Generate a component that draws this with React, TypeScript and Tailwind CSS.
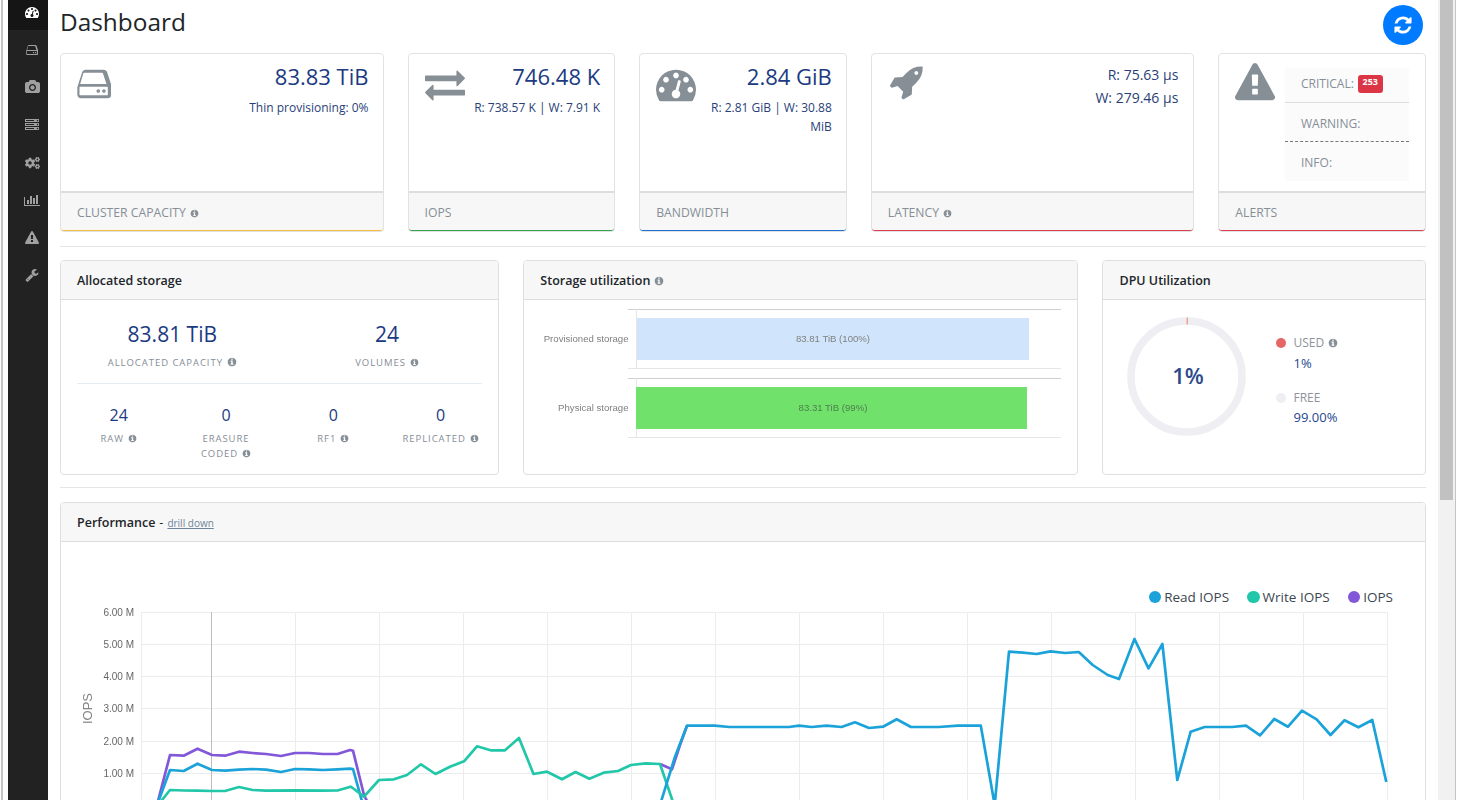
import { FaCogs } from "react-icons/fa";

const paths = {
  tachometer: "M384 1152q0-53-37.5-90.5t-90.5-37.5-90.5 37.5-37.5 90.5 37.5 90.5 90.5 37.5 90.5-37.5 37.5-90.5zm192-448q0-53-37.5-90.5t-90.5-37.5-90.5 37.5-37.5 90.5 37.5 90.5 90.5 37.5 90.5-37.5 37.5-90.5zm428 481l101-382q6-26-7.5-48.5t-38.5-29.5-48 6.5-30 39.5l-101 382q-60 5-107 43.5t-63 98.5q-20 77 20 146t117 89 146-20 89-117q16-60-6-117t-72-91zm660-33q0-53-37.5-90.5t-90.5-37.5-90.5 37.5-37.5 90.5 37.5 90.5 90.5 37.5 90.5-37.5 37.5-90.5zm-640-640q0-53-37.5-90.5t-90.5-37.5-90.5 37.5-37.5 90.5 37.5 90.5 90.5 37.5 90.5-37.5 37.5-90.5zm448 192q0-53-37.5-90.5t-90.5-37.5-90.5 37.5-37.5 90.5 37.5 90.5 90.5 37.5 90.5-37.5 37.5-90.5zm320 448q0 261-141 483-19 29-54 29h-1402q-35 0-54-29-141-221-141-483 0-182 71-348t191-286 286-191 348-71 348 71 286 191 191 286 71 348z",
  hdd: "M1040 1216q0 33-23.5 56.5t-56.5 23.5-56.5-23.5-23.5-56.5 23.5-56.5 56.5-23.5 56.5 23.5 23.5 56.5zm256 0q0 33-23.5 56.5t-56.5 23.5-56.5-23.5-23.5-56.5 23.5-56.5 56.5-23.5 56.5 23.5 23.5 56.5zm96 160v-320q0-13-9.5-22.5t-22.5-9.5h-1216q-13 0-22.5 9.5t-9.5 22.5v320q0 13 9.5 22.5t22.5 9.5h1216q13 0 22.5-9.5t9.5-22.5zm-1248-475h1188l-158-485q-4-13-16-21.5t-26-8.5h-808q-14 0-26 8.5t-16 21.5zm1408 155v320q0 66-47 113t-113 47h-1216q-66 0-113-47t-47-113v-320q0-25 16-75l197-606q17-53 63-86t101-33h808q55 0 101 33t63 86l197 606q16 50 16 75z",
  exchange: "M1792 1184v192q0 13-9.5 22.5t-22.5 9.5h-1376v192q0 13-9.5 22.5t-22.5 9.5q-12 0-24-10l-319-320q-9-9-9-22 0-14 9-23l320-320q9-9 23-9 13 0 22.5 9.5t9.5 22.5v192h1376q13 0 22.5 9.5t9.5 22.5zm0-544q0 14-9 23l-320 320q-9 9-23 9-13 0-22.5-9.5t-9.5-22.5v-192h-1376q-13 0-22.5-9.5t-9.5-22.5v-192q0-13 9.5-22.5t22.5-9.5h1376v-192q0-14 9-23t23-9q12 0 24 10l319 319q9 9 9 23z",
  rocket: "M1504 448q0-40-28-68t-68-28-68 28-28 68 28 68 68 28 68-28 28-68zm224-288q0 249-75.5 430.5t-253.5 360.5q-81 80-195 176l-20 379q-2 16-16 26l-384 224q-7 4-16 4-12 0-23-9l-64-64q-13-14-8-32l85-276-281-281-276 85q-3 1-9 1-14 0-23-9l-64-64q-17-19-5-39l224-384q10-14 26-16l379-20q96-114 176-195 188-187 358-258t431-71q14 0 24 9.5t10 22.5z",
  warning: "M1024 1375v-190q0-14-9.5-23.5t-22.5-9.5h-192q-13 0-22.5 9.5t-9.5 23.5v190q0 14 9.5 23.5t22.5 9.5h192q13 0 22.5-9.5t9.5-23.5zm-2-374l18-459q0-12-10-19-13-11-24-11h-220q-11 0-24 11-10 7-10 21l17 457q0 10 10 16.5t24 6.5h185q14 0 23.5-6.5t10.5-16.5zm-14-934l768 1408q35 63-2 126-17 29-46.5 46t-63.5 17h-1536q-34 0-63.5-17t-46.5-46q-37-63-2-126l768-1408q17-31 47-49t65-18 65 18 47 49z",
  refresh: "M1639 1056q0 5-1 7-64 268-268 434.5t-478 166.5q-146 0-282.5-55t-243.5-157l-129 129q-19 19-45 19t-45-19-19-45v-448q0-26 19-45t45-19h448q26 0 45 19t19 45-19 45l-137 137q71 66 161 102t187 36q134 0 250-65t186-179q11-17 53-117 8-23 30-23h192q13 0 22.5 9.5t9.5 22.5zm25-800v448q0 26-19 45t-45 19h-448q-26 0-45-19t-19-45 19-45l138-138q-148-137-349-137-134 0-250 65t-186 179q-11 17-53 117-8 23-30 23h-199q-13 0-22.5-9.5t-9.5-22.5v-7q65-268 270-434.5t480-166.5q146 0 284 55.5t245 156.5l130-129q19-19 45-19t45 19 19 45z",
  info: "M1152 1376v-160q0-14-9-23t-23-9h-96v-512q0-14-9-23t-23-9h-320q-14 0-23 9t-9 23v160q0 14 9 23t23 9h96v320h-96q-14 0-23 9t-9 23v160q0 14 9 23t23 9h448q14 0 23-9t9-23zm-128-896v-160q0-14-9-23t-23-9h-192q-14 0-23 9t-9 23v160q0 14 9 23t23 9h192q14 0 23-9t9-23zm640 416q0 209-103 385.5t-279.5 279.5-385.5 103-385.5-103-279.5-279.5-103-385.5 103-385.5 279.5-279.5 385.5-103 385.5 103 279.5 279.5 103 385.5z",
  camera: "M960 672q119 0 203.5 84.5t84.5 203.5-84.5 203.5-203.5 84.5-203.5-84.5-84.5-203.5 84.5-203.5 203.5-84.5zm704-416q106 0 181 75t75 181v896q0 106-75 181t-181 75h-1408q-106 0-181-75t-75-181v-896q0-106 75-181t181-75h224l51-136q19-49 69.5-84.5t103.5-35.5h512q53 0 103.5 35.5t69.5 84.5l51 136h224zm-704 1152q185 0 316.5-131.5t131.5-316.5-131.5-316.5-316.5-131.5-316.5 131.5-131.5 316.5 131.5 316.5 316.5 131.5z",
  server: "M128 1408h1024v-128h-1024v128zm0-512h1024v-128h-1024v128zm1568 448q0-40-28-68t-68-28-68 28-28 68 28 68 68 28 68-28 28-68zm-1568-960h1024v-128h-1024v128zm1568 448q0-40-28-68t-68-28-68 28-28 68 28 68 68 28 68-28 28-68zm0-512q0-40-28-68t-68-28-68 28-28 68 28 68 68 28 68-28 28-68zm96 832v384h-1792v-384h1792zm0-512v384h-1792v-384h1792zm0-512v384h-1792v-384h1792z",
  barChart: "M640 896v512h-256v-512h256zm384-512v1024h-256v-1024h256zm1024 1152v128h-2048v-1152h128v1024h1920zm-640-896v768h-256v-768h256zm384-384v1152h-256v-1152h256z",
  wrench: "M448 1472q0-26-19-45t-45-19-45 19-19 45 19 45 45 19 45-19 19-45zm644-420l-682 682q-37 37-90 37-52 0-91-37l-106-108q-38-36-38-90 0-53 38-91l681-681q39 98 114.5 173.5t173.5 114.5zm634-435q0 39-23 106-47 134-164.5 217.5t-258.5 83.5q-185 0-316.5-131.5t-131.5-316.5 131.5-316.5 316.5-131.5q58 0 121.5 16.5t107.5 46.5q16 11 16 28t-16 28l-293 169v224l193 107q5-3 79-48.5t135.5-81 70.5-35.5q15 0 23.5 10t8.5 25z",
};

const Fa = ({ d, vw = 1792, className }: { d: string; vw?: number; className: string }) => (
  <svg viewBox={`0 0 ${vw} 1792`} fill="currentColor" className={className}>
    <path d={d} />
  </svg>
);

const Info = ({ big }: { big?: boolean }) => (
  <Fa d={paths.info} className={`inline-block text-[#868e96] align-[-1px] ml-1 ${big ? "w-[10px] h-[10px]" : "w-[9px] h-[9px]"}`} />
);

const sideItems = [
  <Fa d={paths.hdd} vw={1536} className="w-[12px] h-[14px]" />,
  <Fa d={paths.camera} vw={1920} className="w-[15px] h-[14px]" />,
  <Fa d={paths.server} className="w-[14px] h-[14px]" />,
  <FaCogs className="w-[15px] h-[14px]" />,
  <Fa d={paths.barChart} vw={2048} className="w-[16px] h-[14px]" />,
  <Fa d={paths.warning} className="w-[14px] h-[14px]" />,
  <Fa d={paths.wrench} className="w-[14px] h-[14px]" />,
];

const Sidebar = () => (
  <div className="w-10 shrink-0 bg-[#222222] text-[#a0a0a0]">
    <div className="h-[30px] pb-[6px] mb-px bg-[#151515] text-white flex items-center justify-center pl-2">
      <Fa d={paths.tachometer} className="w-[14px] h-[14px]" />
    </div>
    {sideItems.map((icon, i) => (
      <div key={i} className="h-[37.6px] flex items-center justify-center pl-2">
        {icon}
      </div>
    ))}
  </div>
);

const StatCard = ({ icon, label, info, border, children }: {
  icon: React.ReactNode; label: string; info?: boolean; border: string; children: React.ReactNode;
}) => (
  <div className="h-[179px] flex flex-col bg-white border border-[#e2e2e2] rounded-[4px]">
    <div className="flex-1 flex justify-between pl-4 pr-[14px] min-h-0">
      <div className="shrink-0 text-[#868e96] pt-[10px]">{icon}</div>
      {children}
    </div>
    <div className={`h-[40px] shrink-0 flex items-center px-4 pt-[3px] bg-[#f7f7f7] border-t-2 border-t-[#dddddd] border-b ${border} rounded-b-[3px] text-[12.2px] text-[#868e96]`}>
      {label}
      {info && <Info />}
    </div>
  </div>
);

const StatValue = ({ value, sub }: { value: string; sub: string }) => (
  <div className="text-right pt-[8px] text-[#1b3a82]">
    <div className="text-[22px] leading-[28px]">{value}</div>
    <div className="text-[12px] leading-[19px] mt-[8px] text-[#2a3f78]">{sub}</div>
  </div>
);

const Card = ({ title, children, className = "" }: { title: React.ReactNode; children: React.ReactNode; className?: string }) => (
  <div className={`border border-[#dfdfdf] rounded-[4px] bg-white flex flex-col ${className}`}>
    <div className="h-[39px] shrink-0 flex items-center px-4 pt-[2px] bg-[#f7f7f7] border-b border-[#dddddd] rounded-t-[3px] text-[12.5px] font-semibold text-[#212529]">
      {title}
    </div>
    {children}
  </div>
);

const Metric = ({ value, label, big }: { value: string; label: React.ReactNode; big?: boolean }) => (
  <div className="text-center">
    <div className={big ? "text-[21px] leading-[30px] text-[#1b3a82]" : "text-[16px] leading-[24px] text-[#1b3a82]"}>{value}</div>
    <div className={`text-[9.5px] tracking-[0.1em] leading-[15px] text-[#868e96] ${big ? "mt-[6px]" : "mt-[4px]"}`}>{label}</div>
  </div>
);

const AllocatedStorage = () => (
  <Card title="Allocated storage">
    <div className="px-4">
      <div className="-mx-3 grid grid-cols-2 pt-[19px]">
        <Metric big value="83.81 TiB" label={<>ALLOCATED CAPACITY<Info big /></>} />
        <Metric big value="24" label={<>VOLUMES<Info /></>} />
      </div>
      <div className="border-t border-[#e3ebf5] mt-[13px]" />
      <div className="-mx-3 grid grid-cols-4 pt-[19px]">
        <Metric value="24" label={<>RAW<Info /></>} />
        <Metric value="0" label={<>ERASURE<br />CODED<Info /></>} />
        <Metric value="0" label={<>RF1<Info /></>} />
        <Metric value="0" label={<>REPLICATED<Info /></>} />
      </div>
    </div>
  </Card>
);

const StorageChart = () => (
  <Card title={<>Storage utilization<Info big /></>}>
    <svg viewBox="524 300 553 174" className="w-[553px] h-[174px] blur-[0.3px] font-['Liberation_Sans',sans-serif]">
      <g fill="none" strokeWidth="1">
        <path d="M628 309.5H1061M628 378.5H1061" stroke="#cfcfcf" />
        <path d="M628 368.5H1061M628 437.5H1061M636.5 309V368M636.5 378V437" stroke="#e6e6e6" />
      </g>
      <rect x="637" y="318" width="392" height="42" fill="#d0e5fb" />
      <rect x="636" y="387" width="391" height="42" fill="#70e26b" />
      <g fontSize="9.6" fill="#808080">
        <text x="628.5" y="341.5" textAnchor="end">Provisioned storage</text>
        <text x="628.5" y="410.5" textAnchor="end">Physical storage</text>
        <text x="833" y="341.5" textAnchor="middle">83.81 TiB (100%)</text>
      </g>
      <text x="833" y="410.5" textAnchor="middle" fontSize="9.6" fill="#4f7f4c">83.31 TiB (99%)</text>
    </svg>
  </Card>
);

const DpuChart = () => (
  <Card title="DPU Utilization">
    <div className="flex items-start pl-6 pt-[17px]">
      <div className="relative w-[119px] h-[119px] shrink-0">
        <svg viewBox="0 0 119 119" className="w-[119px] h-[119px]">
          <circle cx="59.5" cy="59.5" r="55.5" fill="none" stroke="#eeeef3" strokeWidth="7.5" />
          <rect x="59.5" y="0.5" width="1.5" height="7" fill="#eba68f" />
        </svg>
        <div className="absolute inset-0 flex items-center justify-center pl-[2px] pb-[2px] text-[22px] font-semibold text-[#2d4a8a]">1%</div>
      </div>
      <div className="ml-[30px] pt-[16px] text-[12px] leading-[20px]">
        <div className="flex items-center gap-[7px] text-[#8f9399]">
          <span className="w-[10px] h-[10px] rounded-full bg-[#e46666]" />
          <span>USED<Info big /></span>
        </div>
        <div className="pl-[17px] text-[13px] text-[#24468f]">1%</div>
        <div className="flex items-center gap-[7px] text-[#8f9399] mt-[15px]">
          <span className="w-[10px] h-[10px] rounded-full bg-[#eeeef3]" />
          <span>FREE</span>
        </div>
        <div className="pl-[17px] -mt-px text-[13px] text-[#24468f]">99.00%</div>
      </div>
    </div>
  </Card>
);

const purple = "157,805 170,755 183.7,755.7 197.5,748.7 212,755 225,755.7 239,751.7 252.6,753 266,754 281,756 295,753 309,753 323,754 337.5,754 350,750 353,750.7 364,795 369,805";
const tealLine = "158,805 170,790 183.7,790.5 197.5,790.7 212,791 225,791 239,787 252.6,790 266,790.7 295,790.3 323,790.7 337.5,790.5 350.6,786.7 354,789 364,796.7 379,780 394,779.3 407,775 421,764.3 435.5,774 450,766.7 464,761.3 477,746.3 490.6,750.3 505,750.3 519,738 533.5,774 547,771.7 562,779.3 575.5,772 589.4,778.7 603.7,772.7 618,771 631,765 645.7,763.3 660,764 674,805";
const purpleTail = "660,764 672,769.3 680,745 687,725.7";
const blueLeft = "157,805 170,770 183.7,771 197.5,763.7 212,770 225,770.7 239,769.7 252.6,769 266,769.7 281,772 295,769 309,769.3 323,770 337.5,769.3 350,768.7 353,769 363,805";
const blueRight = "660,805 675,756.7 687,725.7 714.6,725.7 729.5,727 789,727 799,725.7 811.6,727 826.6,725.7 841.5,727 855,722.3 869,728 883,726.7 896.7,719.3 911,727 938.5,727 958,725.7 980.8,725.7 994.7,805 1009,651.7 1023,652.7 1036.5,654 1050.4,651.3 1065.4,653 1078.8,652 1092.7,665 1107.7,675 1119,679 1134.5,639 1148.5,668.3 1162.4,644 1177.3,780 1190.7,731.7 1204.7,727 1232,727 1246,725.7 1260,735.3 1274.3,719 1288,726.7 1302,710.7 1316.6,719.3 1330.5,735 1344.5,720.3 1358.4,727.3 1372.3,720 1386.3,782";

const gridY = [612.5, 644.5, 676.5, 708.5, 741.5, 773.5];
const gridX = [141.5, 295.5, 379.5, 463.5, 547.5, 631.5, 715.5, 799.5, 883.5, 967.5, 1051.5, 1135.5, 1219.5, 1303.5, 1387.5];
const yLabels = ["6.00 M", "5.00 M", "4.00 M", "3.00 M", "2.00 M", "1.00 M"];

const Legend = ({ color, label }: { color: string; label: string }) => (
  <div className="flex items-center gap-[3px]">
    <span className={`w-[12.5px] h-[12.5px] rounded-full ${color}`} />
    <span>{label}</span>
  </div>
);

const Performance = () => (
  <Card title={<>Performance<span className="font-normal ml-1">-</span><span className="ml-1 font-normal text-[10px] underline text-[#6f8499]">drill down</span></>}>
    <div className="flex justify-end gap-[18px] pt-[46px] pr-[32px] text-[13.5px] leading-[18px] text-[#3c4650]">
      <Legend color="bg-[#1ba3d9]" label="Read IOPS" />
      <Legend color="bg-[#22c7a9]" label="Write IOPS" />
      <Legend color="bg-[#8257d8]" label="IOPS" />
    </div>
    <svg viewBox="61 606 1364 202" className="w-[1364px] h-[202px] blur-[0.3px] font-['Liberation_Sans',sans-serif]">
      <g stroke="#ececec" strokeWidth="1" fill="none">
        {gridY.map((y) => <line key={y} x1="141" x2="1387" y1={y} y2={y} />)}
        {gridX.map((x) => <line key={x} x1={x} x2={x} y1="612" y2="808" />)}
      </g>
      <line x1="211.5" x2="211.5" y1="612" y2="808" stroke="#bdbdbd" />
      <g fontSize="10" fill="#666666">
        {yLabels.map((t, i) => <text key={t} x="134" y={gridY[i] + 3.5} textAnchor="end">{t}</text>)}
      </g>
      <text transform="translate(91.5 708.5) rotate(-90)" textAnchor="middle" fontSize="13" fill="#858585">IOPS</text>
      <g fill="none" strokeWidth="2.7" strokeLinejoin="round">
        <polyline points={purple} stroke="#8257d8" />
        <polyline points={purpleTail} stroke="#8257d8" />
        <polyline points={blueLeft} stroke="#1ba3d9" />
        <polyline points={tealLine} stroke="#22c7a9" />
        <polyline points={blueRight} stroke="#1ba3d9" />
      </g>
    </svg>
  </Card>
);

const App = () => {
  return (
    <div className="h-screen overflow-hidden flex bg-white font-['Open_Sans',sans-serif]">
      <div className="w-2 shrink-0 pl-px">
        <div className="w-[2px] h-full bg-[#c4c4c4]" />
      </div>
      <Sidebar />
      <div className="flex-1 min-w-0 px-3">
        <div className="h-[53px] flex justify-between">
          <h1 className="text-[24.4px] font-medium leading-[43px] text-[#212529]">Dashboard</h1>
          <button className="w-10 h-10 mt-[5px] mr-[3px] rounded-full bg-[#007bff] text-white flex items-center justify-center">
            <Fa d={paths.refresh} className="w-[20px] h-[20px]" />
          </button>
        </div>

        <div className="grid grid-cols-[323.5px_207.67px_207.67px_323.5px_207.67px] gap-x-6">
          <StatCard label="CLUSTER CAPACITY" info border="border-b-[#f5bd3f]" icon={<Fa d={paths.hdd} vw={1536} className="w-[34px] h-[40px]" />}>
            <StatValue value="83.83 TiB" sub="Thin provisioning: 0%" />
          </StatCard>
          <StatCard label="IOPS" border="border-b-[#36a04a]" icon={<Fa d={paths.exchange} className="w-[40px] h-[40px]" />}>
            <StatValue value="746.48 K" sub="R: 738.57 K | W: 7.91 K" />
          </StatCard>
          <StatCard label="BANDWIDTH" border="border-b-[#1f6fd6]" icon={<Fa d={paths.tachometer} className="w-[40px] h-[40px]" />}>
            <StatValue value="2.84 GiB" sub="R: 2.81 GiB | W: 30.88 MiB" />
          </StatCard>
          <StatCard label="LATENCY" info border="border-b-[#d9414f]" icon={<Fa d={paths.rocket} className="w-[36px] h-[36px]" />}>
            <div className="text-right pt-[9px] pr-px text-[14px] leading-[23px] text-[#2a3f78]">
              <div>R: 75.63 µs</div>
              <div>W: 279.46 µs</div>
            </div>
          </StatCard>
          <StatCard label="ALERTS" border="border-b-[#d9414f]" icon={<Fa d={paths.warning} className="w-[40px] h-[40px] -mt-px" />}>
            <div className="w-[124px] h-[113px] mt-[14px] mr-[2px] bg-[#fbfbfb] text-[12px] text-[#868e96]">
              <div className="h-[35px] pl-4 pb-[2px] flex items-center border-b border-[#dddddd]">
                CRITICAL:
                <span className="ml-1 mb-[1px] w-[25px] h-[18px] rounded-[3px] bg-[#dc3545] text-white text-[9px] font-bold leading-[14px] text-center">253</span>
              </div>
              <div className="h-[39px] pl-4 pt-[3px] flex items-center border-b border-dashed border-[#777777]">WARNING:</div>
              <div className="h-[39px] pl-4 pt-[2px] flex items-center">INFO:</div>
            </div>
          </StatCard>
        </div>

        <div className="border-t border-[#e5e5e5] mt-[14px] mb-[13px]" />

        <div className="grid grid-cols-[439.33px_555.17px_323.5px] gap-x-6 h-[214px]">
          <AllocatedStorage />
          <StorageChart />
          <DpuChart />
        </div>

        <div className="border-t border-[#e5e5e5] mt-[13px] mb-[14px]" />

        <Performance />
      </div>
      <div className="w-[18px] shrink-0 bg-[#f1f1f1] pl-[2px] border-r border-[#c4c4c4]">
        <div className="w-[13px] h-[500px] bg-[#c1c1c1]" />
      </div>
      <div className="w-[7px] shrink-0" />
    </div>
  );
};

export default App;
